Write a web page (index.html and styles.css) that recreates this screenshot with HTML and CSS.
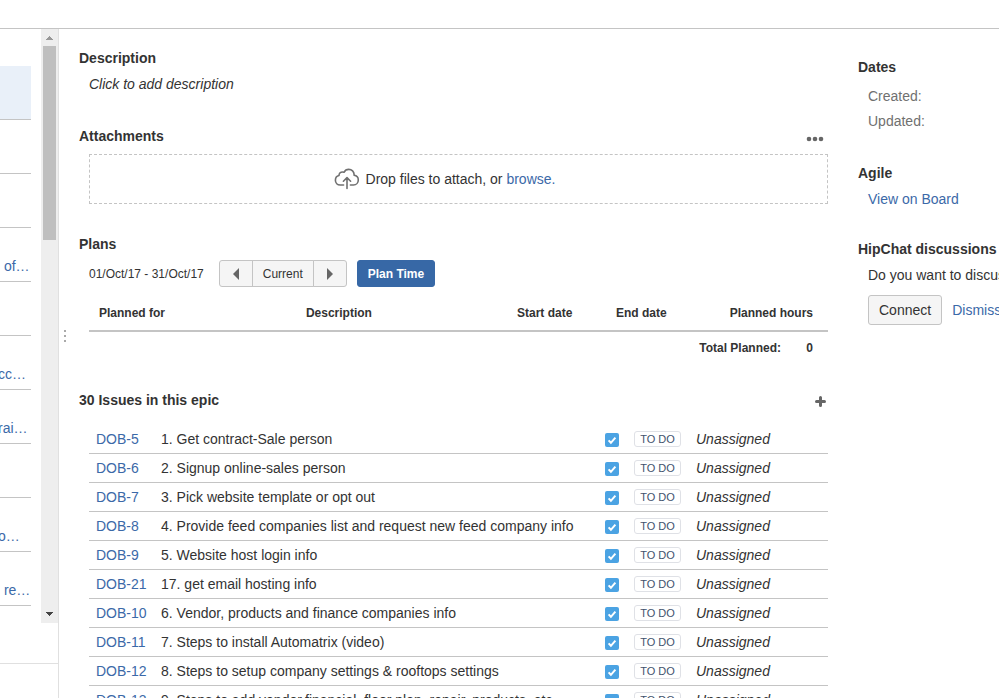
FILE: index.html
```html
<!DOCTYPE html>
<html lang="en">
<head>
<meta charset="utf-8">
<title>Issues</title>
<link rel="stylesheet" href="styles.css">
</head>
<body>
<svg class="defs" aria-hidden="true">
  <symbol id="task" viewBox="0 0 14 14">
    <rect width="14" height="14" rx="2" fill="#4ba3e3"/>
    <path d="M3.6 7.4 5.9 9.8 10.4 4.6" fill="none" stroke="#fff" stroke-width="2"/>
  </symbol>
</svg>
<header class="topbar"></header>
<div class="workspace">
  <nav class="issue-nav" aria-label="Issue list">
    <div class="nav-scroll">
      <ul class="nav-list">
        <li class="selected"></li>
        <li></li>
        <li></li>
        <li><a href="#"> of…</a></li>
        <li></li>
        <li><a class="mid-word" href="#">cc…</a></li>
        <li><a class="mid-word" href="#">rai…</a></li>
        <li></li>
        <li><a class="mid-word" href="#">o…</a></li>
        <li><a href="#"> re…</a></li>
      </ul>
      <div class="scrollbar">
        <svg class="arrow" viewBox="0 0 17 17"><path d="M5 11h7v-1h-1V9h-1V8H9V7H8v1H7v1H6v1H5z" fill="#989898"/></svg>
        <div class="thumb"></div>
        <svg class="arrow" viewBox="0 0 17 17"><path d="M5 6h7v1h-1v1h-1v1H9v1H8V9H7V8H6V7H5z" fill="#444"/></svg>
      </div>
    </div>
    <div class="nav-footer"></div>
  </nav>
  <div class="resizer"><i></i><i></i><i></i></div>
  <main class="content">
    <section>
      <h2>Description</h2>
      <p class="placeholder">Click to add description</p>
    </section>
    <section class="attachments">
      <div class="section-head">
        <h2>Attachments</h2>
        <button class="icon-button" aria-label="More attachment options">
          <svg width="18" height="14" viewBox="0 0 18 14" fill="#666"><circle cx="3" cy="7" r="2.3"/><circle cx="9" cy="7" r="2.3"/><circle cx="15" cy="7" r="2.3"/></svg>
        </button>
      </div>
      <div class="dropzone">
        <svg width="26" height="22" viewBox="0 0 26 22" fill="none" stroke="#707070" stroke-width="1.6" stroke-linecap="round" stroke-linejoin="round"><path d="M9.6 17H6.2C3.4 17 1.4 14.8 1.4 12.2c0-2.4 1.5-4.2 3.6-4.700C5 5.300 6.600 4 8.500 4c.6 0 1 .1 1.500.3C10.900 2.500 12.700 1.400 14.800 1.400c3 0 5.300 2.300 5.300 5.100v.8c2.300.3 4.200 2.200 4.200 4.700 0 2.800-2.100 5-4.800 5h-3.100M13 20.500V10M9.400 13.200 13 9.600l3.600 3.600"/></svg>
        <span>Drop files to attach, or <a href="#">browse.</a></span>
      </div>
    </section>
    <section class="planning">
      <h2>Plans</h2>
      <div class="plan-tools">
        <span>01/Oct/17 - 31/Oct/17</span>
        <div class="button-group">
          <button aria-label="Previous period"><svg width="8" height="12" viewBox="0 0 8 12"><path d="M7 0v12L1 6z" fill="#666"/></svg></button>
          <button>Current</button>
          <button aria-label="Next period"><svg width="8" height="12" viewBox="0 0 8 12"><path d="M1 0v12l6-6z" fill="#666"/></svg></button>
        </div>
        <button class="primary">Plan Time</button>
      </div>
      <table class="plans">
        <colgroup><col class="c-for"><col class="c-desc"><col class="c-date"><col class="c-date"><col class="c-total"><col class="c-sum"></colgroup>
        <thead>
          <tr><th>Planned for</th><th>Description</th><th>Start date</th><th>End date</th><th class="num" colspan="2">Planned hours</th></tr>
        </thead>
        <tbody>
          <tr><th class="total" colspan="5">Total Planned:</th><td class="num">0</td></tr>
        </tbody>
      </table>
    </section>
    <section>
      <div class="section-head">
        <h2>30 Issues in this epic</h2>
        <button class="icon-button add" aria-label="Create issue in epic">
          <svg width="11" height="11" viewBox="0 0 11 11"><path d="M5.500 1.500v8M1.500 5.500h8" stroke="#666" stroke-width="3" stroke-linecap="round"/></svg>
        </button>
      </div>
      <table class="issues">
        <colgroup><col class="c-key"><col><col class="c-type"><col class="c-status"><col class="c-who"></colgroup>
        <tbody>
          <tr><td><a href="#">DOB-5</a></td><td>1. Get contract-Sale person</td><td><svg class="task"><use href="#task"/></svg></td><td><span class="lozenge">TO DO</span></td><td><em>Unassigned</em></td></tr>
          <tr><td><a href="#">DOB-6</a></td><td>2. Signup online-sales person</td><td><svg class="task"><use href="#task"/></svg></td><td><span class="lozenge">TO DO</span></td><td><em>Unassigned</em></td></tr>
          <tr><td><a href="#">DOB-7</a></td><td>3. Pick website template or opt out</td><td><svg class="task"><use href="#task"/></svg></td><td><span class="lozenge">TO DO</span></td><td><em>Unassigned</em></td></tr>
          <tr><td><a href="#">DOB-8</a></td><td>4. Provide feed companies list and request new feed company info</td><td><svg class="task"><use href="#task"/></svg></td><td><span class="lozenge">TO DO</span></td><td><em>Unassigned</em></td></tr>
          <tr><td><a href="#">DOB-9</a></td><td>5. Website host login info</td><td><svg class="task"><use href="#task"/></svg></td><td><span class="lozenge">TO DO</span></td><td><em>Unassigned</em></td></tr>
          <tr><td><a href="#">DOB-21</a></td><td>17. get email hosting info</td><td><svg class="task"><use href="#task"/></svg></td><td><span class="lozenge">TO DO</span></td><td><em>Unassigned</em></td></tr>
          <tr><td><a href="#">DOB-10</a></td><td>6. Vendor, products and finance companies info</td><td><svg class="task"><use href="#task"/></svg></td><td><span class="lozenge">TO DO</span></td><td><em>Unassigned</em></td></tr>
          <tr><td><a href="#">DOB-11</a></td><td>7. Steps to install Automatrix (video)</td><td><svg class="task"><use href="#task"/></svg></td><td><span class="lozenge">TO DO</span></td><td><em>Unassigned</em></td></tr>
          <tr><td><a href="#">DOB-12</a></td><td>8. Steps to setup company settings &amp; rooftops settings</td><td><svg class="task"><use href="#task"/></svg></td><td><span class="lozenge">TO DO</span></td><td><em>Unassigned</em></td></tr>
          <tr><td><a href="#">DOB-13</a></td><td>9. Steps to add vendor,financial, floor plan, repair, products, etc</td><td><svg class="task"><use href="#task"/></svg></td><td><span class="lozenge">TO DO</span></td><td><em>Unassigned</em></td></tr>
        </tbody>
      </table>
    </section>
  </main>
  <aside class="sidebar">
    <section>
      <h2>Dates</h2>
      <dl><dt>Created:</dt><dt>Updated:</dt></dl>
    </section>
    <section>
      <h2>Agile</h2>
      <p><a href="#">View on Board</a></p>
    </section>
    <section>
      <h2>HipChat discussions</h2>
      <p>Do you want to discuss</p>
      <div class="actions"><button>Connect</button><a href="#">Dismiss</a></div>
    </section>
  </aside>
</div>
</body>
</html>
```
FILE: styles.css
```css
* { box-sizing: border-box; }
body {
  margin: 0;
  height: 100vh;
  overflow: hidden;
  display: flex;
  flex-direction: column;
  background: #fff;
  color: #333;
  font: 14px/20px "Liberation Sans", Arial, sans-serif;
}
h2 { margin: 0; font-size: 14px; line-height: 20px; }
p, dl, ul { margin: 0; padding: 0; }
a { color: #3b69a8; text-decoration: none; }
button {
  margin: 0;
  border: 1px solid #c4c4c4;
  border-radius: 3px;
  background: #f5f5f5;
  color: #333;
  font: inherit;
}
.defs { display: none; }
.topbar { flex: 0 0 29px; border-bottom: 1px solid #c4c4c4; }
.workspace { flex: 1; min-height: 0; display: flex; overflow: hidden; }

.issue-nav {
  flex: 0 0 59px;
  display: flex;
  flex-direction: column;
  border-right: 1px solid #e0e0e0;
}
.nav-scroll { flex: 1; min-height: 0; display: flex; justify-content: space-between; margin-bottom: 40px; overflow: hidden; }
.nav-list { width: 31px; padding-top: 37px; list-style: none; overflow: hidden; }
.nav-list li { height: 54px; padding-top: 28px; border-bottom: 1px solid #c4c4c4; white-space: pre; }
.nav-list .selected { background: #e9f0f9; }
.mid-word { margin-left: -2px; }
.scrollbar { width: 17px; display: flex; flex-direction: column; background: #eee; }
.arrow { width: 17px; height: 17px; flex: none; shape-rendering: crispEdges; }
.thumb { height: 194px; margin: 0 2px auto; background: #bfbfbf; }
.nav-footer { flex: 0 0 35px; border-top: 1px solid #e0e0e0; }

.resizer {
  flex: 0 0 20px;
  display: flex;
  flex-direction: column;
  align-items: flex-start;
  justify-content: center;
  gap: 3px;
  padding: 0 5px 56px;
}
.resizer i { width: 2px; height: 2px; background: #aaa; }

.content { flex: 1; min-width: 0; padding-top: 19px; }
.content section { margin-bottom: 32px; }
.content .attachments { margin-bottom: 30px; }
.content .planning { margin-bottom: 26px; }
.placeholder { margin: 6px 0 0 10px; font-style: italic; }
.section-head { display: flex; justify-content: space-between; align-items: center; }
.icon-button { display: flex; padding: 6px 4px 0; border: 0; background: none; }
.icon-button.add { padding: 4px 2px 2px; }
.dropzone {
  height: 50px;
  margin: 8px 0 0 10px;
  padding-right: 28px;
  display: flex;
  align-items: center;
  justify-content: center;
  gap: 6px;
  border: 1px dashed #c4c4c4;
}
.plan-tools { display: flex; align-items: center; gap: 10px; margin: 6px 0 0 10px; font-size: 12px; }
.button-group { display: flex; margin-left: 5px; }
.button-group button { height: 27px; padding: 0 10px; margin-left: -1px; border-radius: 0; }
.button-group button:first-child { margin-left: 0; border-radius: 3px 0 0 3px; }
.button-group button:last-child { border-radius: 0 3px 3px 0; }
.button-group button:not(:nth-child(2)) { display: flex; align-items: center; padding: 0 12px; }
.primary { height: 27px; padding: 0 10px; border-color: #3768a6; background: #3768a6; color: #fff; font-weight: bold; }

table { border-spacing: 0; table-layout: fixed; width: calc(100% - 10px); margin-left: 10px; }
.plans { margin-top: 8px; font-size: 12px; }
.plans th, .plans td { padding: 6px 10px; text-align: left; font-weight: bold; }
.plans thead th { padding: 8px 10px 7px; border-bottom: 2px solid #c4c4c4; }
.plans .num, .plans thead .num { padding-right: 15px; text-align: right; }
.plans .total { text-align: right; }
.c-for { width: 28%; }
.c-date { width: 99px; }
.c-total { width: 86px; }
.c-sum { width: 37px; }

.issues { margin-top: 15px; white-space: nowrap; }
.issues td { height: 29px; padding: 0 7px; border-bottom: 1px solid #c4c4c4; }
.c-key { width: 65px; }
.c-type { width: 29px; }
.c-status { width: 62px; }
.c-who { width: 139px; }
.task { display: block; width: 14px; height: 14px; margin-top: 2px; }
.lozenge {
  display: block;
  width: 47px;
  height: 16px;
  border: 1px solid #dfe1e6;
  border-radius: 3px;
  color: #42526e;
  font-size: 11px;
  line-height: 14px;
  text-align: center;
}

.sidebar { flex: 0 0 141px; margin-left: 30px; padding-top: 28px; white-space: nowrap; overflow: hidden; }
.sidebar section { margin-bottom: 30px; }
.sidebar dl { padding: 7px 0 0 10px; color: #707070; line-height: 25px; }
.sidebar section:first-child { margin-bottom: 29px; }
.sidebar p { margin: 6px 0 0 10px; }
.actions { display: flex; align-items: center; gap: 10px; margin: 10px 0 0 10px; }
.actions button { height: 30px; padding: 0 10px; }
```
